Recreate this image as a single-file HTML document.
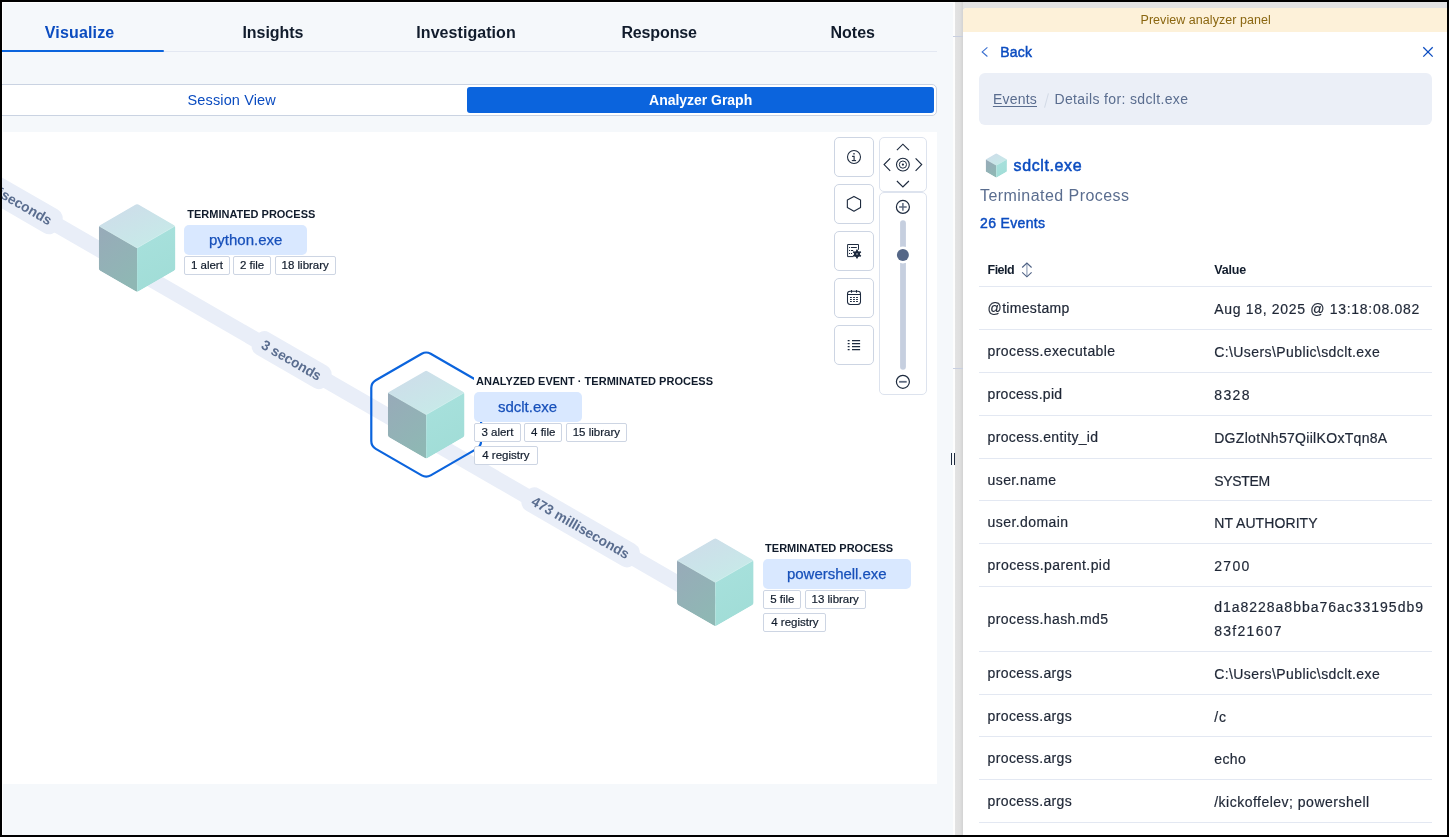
<!DOCTYPE html><html><head><meta charset="utf-8"><style>
*{box-sizing:border-box}
html,body{margin:0;padding:0;width:1449px;height:837px;overflow:hidden;background:#000;font-family:"Liberation Sans", sans-serif}
#frame{position:absolute;left:2px;top:2px;width:1445px;height:833px;background:#fff;overflow:hidden}
#in{position:absolute;left:-2px;top:-2px;width:1449px;height:837px;will-change:transform}
.t{position:absolute;white-space:pre;line-height:1;font-family:"Liberation Sans", sans-serif}
.pill{position:absolute;height:29.7px;background:#d9e8ff;border-radius:5px}
.bdg{position:absolute;height:19px;border:1px solid #cdd5e3;border-radius:2px;background:#fff;font-size:11.5px;color:#111c2c;-webkit-text-stroke:0.2px #111c2c;line-height:17px;text-align:center;white-space:pre}
.cbtn{position:absolute;left:834px;width:40px;height:40px;border:1px solid #cdd5e3;border-radius:5px;background:#fff}
.cbtn svg,.navbox svg{position:absolute;left:-1px;top:-1px}
.navbox{position:absolute;border:1px solid #dde3ee;border-radius:5px;background:#fff}
</style></head><body><div id="frame"><div id="in">
<div style="position:absolute;left:3px;top:3px;width:950px;height:834px;background:#f5f8fb"></div>
<div style="position:absolute;left:2px;top:51px;width:935px;height:1px;background:#e3e8f2"></div>
<div style="position:absolute;left:2px;top:50px;width:162px;height:2px;background:#0b64dd;border-radius:0 1px 1px 0"></div>
<div style="position:absolute;left:-10px;top:84px;width:946.5px;height:32px;background:#fff;border:1px solid #cad3e2;border-radius:5px"></div>
<div style="position:absolute;left:467px;top:87px;width:467px;height:26px;background:#0b64dd;border-radius:3px"></div>
<div style="position:absolute;left:2px;top:132px;width:935px;height:652px;background:#fff"></div>
<svg width="935" height="652" viewBox="2 132 935 652" style="position:absolute;left:2px;top:132px"><defs><linearGradient id="gt" x1="0" y1="0" x2="0.8" y2="1"><stop offset="0" stop-color="#cfdbea"/><stop offset="1" stop-color="#c6ebe8"/></linearGradient><linearGradient id="gl" x1="0" y1="0" x2="0.5" y2="1"><stop offset="0" stop-color="#98aab9"/><stop offset="1" stop-color="#8fb7b4"/></linearGradient><linearGradient id="gr" x1="0" y1="0" x2="0.3" y2="1"><stop offset="0" stop-color="#a8e1dd"/><stop offset="1" stop-color="#a1ddd7"/></linearGradient></defs><line x1="-60" y1="157.45" x2="715" y2="604.94" stroke="#e9eef8" stroke-width="15.5"/><g transform="translate(3.1,193.6) rotate(30)"><rect x="-65.25" y="-13.5" width="130.5" height="27" rx="10" fill="#e9eef8"/><text x="0" y="5.04" text-anchor="middle" font-family="Liberation Sans" font-weight="700" font-size="14" fill="#5a6d8f" textLength="110.5" lengthAdjust="spacingAndGlyphs">473 milliseconds</text></g><g transform="translate(291.6,360.1) rotate(30)"><rect x="-43.25" y="-12.75" width="86.5" height="25.5" rx="10" fill="#e9eef8"/><text x="0" y="5.04" text-anchor="middle" font-family="Liberation Sans" font-weight="700" font-size="14" fill="#5a6d8f" textLength="66.5" lengthAdjust="spacingAndGlyphs">3 seconds</text></g><g transform="translate(580.6,527.4) rotate(30)"><rect x="-65.25" y="-12.75" width="130.5" height="25.5" rx="10" fill="#e9eef8"/><text x="0" y="5.04" text-anchor="middle" font-family="Liberation Sans" font-weight="700" font-size="14" fill="#5a6d8f" textLength="110.5" lengthAdjust="spacingAndGlyphs">473 milliseconds</text></g><path d="M421.70,353.80 Q426.20,351.20 430.70,353.80 L476.61,380.30 Q481.11,382.90 481.11,388.09 L481.11,441.11 Q481.11,446.30 476.61,448.90 L430.70,475.40 Q426.20,478.00 421.70,475.40 L375.79,448.90 Q371.29,446.30 371.29,441.11 L371.29,388.09 Q371.29,382.90 375.79,380.30 Z" fill="none" stroke="#0b64dd" stroke-width="2.2"/><clipPath id="cc1"><path d="M135.50,204.62 Q137.10,203.70 138.70,204.62 L173.78,224.88 Q175.38,225.80 175.38,227.65 L175.38,268.15 Q175.38,270.00 173.78,270.92 L138.70,291.18 Q137.10,292.10 135.50,291.18 L100.42,270.92 Q98.82,270.00 98.82,268.15 L98.82,227.65 Q98.82,225.80 100.42,224.88 Z"/></clipPath><g clip-path="url(#cc1)"><polygon points="137.10,203.70 175.40,225.80 137.10,247.90 98.80,225.80" fill="url(#gt)" stroke="url(#gt)" stroke-width="0.3"/><polygon points="98.80,225.80 137.10,247.90 137.10,292.10 98.80,270.00" fill="url(#gl)"/><polygon points="137.10,247.90 175.40,225.80 175.40,270.00 137.10,292.10" fill="url(#gr)"/><polyline points="98.80,225.80 137.10,247.90 175.40,225.80" fill="none" stroke="#d2eeee" stroke-width="0.9" stroke-opacity="0.8"/></g><clipPath id="cc2"><path d="M424.60,371.32 Q426.20,370.40 427.80,371.32 L462.88,391.58 Q464.48,392.50 464.48,394.35 L464.48,434.85 Q464.48,436.70 462.88,437.62 L427.80,457.88 Q426.20,458.80 424.60,457.88 L389.52,437.62 Q387.92,436.70 387.92,434.85 L387.92,394.35 Q387.92,392.50 389.52,391.58 Z"/></clipPath><g clip-path="url(#cc2)"><polygon points="426.20,370.40 464.50,392.50 426.20,414.60 387.90,392.50" fill="url(#gt)" stroke="url(#gt)" stroke-width="0.3"/><polygon points="387.90,392.50 426.20,414.60 426.20,458.80 387.90,436.70" fill="url(#gl)"/><polygon points="426.20,414.60 464.50,392.50 464.50,436.70 426.20,458.80" fill="url(#gr)"/><polyline points="387.90,392.50 426.20,414.60 464.50,392.50" fill="none" stroke="#d2eeee" stroke-width="0.9" stroke-opacity="0.8"/></g><clipPath id="cc3"><path d="M713.70,539.02 Q715.30,538.10 716.90,539.02 L751.98,559.28 Q753.58,560.20 753.58,562.05 L753.58,602.55 Q753.58,604.40 751.98,605.32 L716.90,625.58 Q715.30,626.50 713.70,625.58 L678.62,605.32 Q677.02,604.40 677.02,602.55 L677.02,562.05 Q677.02,560.20 678.62,559.28 Z"/></clipPath><g clip-path="url(#cc3)"><polygon points="715.30,538.10 753.60,560.20 715.30,582.30 677.00,560.20" fill="url(#gt)" stroke="url(#gt)" stroke-width="0.3"/><polygon points="677.00,560.20 715.30,582.30 715.30,626.50 677.00,604.40" fill="url(#gl)"/><polygon points="715.30,582.30 753.60,560.20 753.60,604.40 715.30,626.50" fill="url(#gr)"/><polyline points="677.00,560.20 715.30,582.30 753.60,560.20" fill="none" stroke="#d2eeee" stroke-width="0.9" stroke-opacity="0.8"/></g></svg>
<div class="pill" style="left:184.2px;top:225px;width:122.8px"></div><div class="bdg" style="left:184.2px;top:256.0px;width:45.4px">1 alert</div><div class="bdg" style="left:232.8px;top:256.0px;width:38.5px">2 file</div><div class="bdg" style="left:274.5px;top:256.0px;width:61.4px">18 library</div><div style="position:absolute;left:474px;top:374px;width:240px;height:18px;background:#fff"></div><div class="pill" style="left:474px;top:392px;width:107.9px"></div><div class="bdg" style="left:474.0px;top:423.0px;width:46.8px">3 alert</div><div class="bdg" style="left:524.0px;top:423.0px;width:38.4px">4 file</div><div class="bdg" style="left:565.6px;top:423.0px;width:61.5px">15 library</div><div class="bdg" style="left:474.0px;top:446.0px;width:63.8px">4 registry</div><div class="pill" style="left:763.3px;top:559px;width:147.5px"></div><div class="bdg" style="left:763.3px;top:590.3px;width:38.1px">5 file</div><div class="bdg" style="left:804.6px;top:590.3px;width:61.2px">13 library</div><div class="bdg" style="left:763.3px;top:613.3px;width:63.2px">4 registry</div>
<div class="cbtn" style="top:137px"><svg width="40" height="40" viewBox="0 0 40 40"><circle cx="20" cy="20" r="6.5" fill="none" stroke="#1d2a3e" stroke-width="1.05"/><rect x="19.3" y="16.1" width="1.4" height="1.4" fill="#1d2a3e"/><path d="M18.1 19.4H20.1V23.4" fill="none" stroke="#1d2a3e" stroke-width="1.1"/><path d="M17.8 23.6H22.1" stroke="#1d2a3e" stroke-width="1.1"/></svg></div><div class="cbtn" style="top:184px"><svg width="40" height="40" viewBox="0 0 40 40"><polygon points="19.95,12.4 26.55,16.1 26.55,23.5 19.95,27.2 13.35,23.5 13.35,16.1" fill="none" stroke="#1d2a3e" stroke-width="1.1" stroke-linejoin="round"/></svg></div><div class="cbtn" style="top:231px"><svg width="40" height="40" viewBox="0 0 40 40"><path d="M24.5 19.2V13.5H13.6V25.6H19.6" fill="none" stroke="#1d2a3e" stroke-width="1"/><path d="M15 16.5h1.1M15 19.5h1.1M15 22.5h1.1M17 16.5h5.8M17 19.5h2.2M17 22.5h1.1" stroke="#1d2a3e" stroke-width="1.1"/><circle cx="23" cy="23" r="4.5" fill="#fff"/><circle cx="23" cy="23" r="3.1" fill="#1d2a3e"/><rect x="22.1" y="18.6" width="1.8" height="8.8" fill="#1d2a3e" transform="rotate(0 23 23)"/><rect x="22.1" y="18.6" width="1.8" height="8.8" fill="#1d2a3e" transform="rotate(60 23 23)"/><rect x="22.1" y="18.6" width="1.8" height="8.8" fill="#1d2a3e" transform="rotate(120 23 23)"/><rect x="22.4" y="22.4" width="1.2" height="1.2" fill="#fff"/></svg></div><div class="cbtn" style="top:278px"><svg width="40" height="40" viewBox="0 0 40 40"><rect x="13.5" y="13.3" width="13" height="13.1" rx="2.6" fill="none" stroke="#1d2a3e" stroke-width="1.05"/><path d="M17.5 11.9v2.9M22.5 11.9v2.9M13.6 16.5h12.8" stroke="#1d2a3e" stroke-width="1.05"/><path d="M16 19.5h1.8M19.1 19.5h1.8M22.1 19.5h1.8M16 21.5h1.8M19.1 21.5h1.8M22.1 21.5h1.8M16 23.5h1.8M19.1 23.5h1.8M22.1 23.5h1.8" stroke="#1d2a3e" stroke-width="1.05"/></svg></div><div class="cbtn" style="top:325px"><svg width="40" height="40" viewBox="0 0 40 40"><path d="M13.7 15.6h1.9M13.7 18.6h1.9M13.7 21.6h1.9M13.7 24.6h1.9M18.0 15.6h8.1M18.0 18.6h8.1M18.0 21.6h8.1M18.0 24.6h8.1" stroke="#1d2a3e" stroke-width="1.1"/></svg></div>
<div class="navbox" style="left:879px;top:137px;width:48px;height:55px"><svg width="48" height="55" viewBox="0 0 48 55">
<path d="M17.90 13.20L23.90 7.20L29.90 13.20" fill="none" stroke="#1d2a3e" stroke-width="1.15"/>
<path d="M17.90 44.00L23.90 50.00L29.90 44.00" fill="none" stroke="#1d2a3e" stroke-width="1.15"/>
<path d="M11.20 21.40L5.10 27.60L11.20 33.80" fill="none" stroke="#1d2a3e" stroke-width="1.15"/>
<path d="M36.60 21.40L42.70 27.60L36.60 33.80" fill="none" stroke="#1d2a3e" stroke-width="1.15"/>
<circle cx="23.899999999999977" cy="27.599999999999994" r="6.4" fill="none" stroke="#1d2a3e" stroke-width="1.1"/>
<circle cx="23.899999999999977" cy="27.599999999999994" r="3.6" fill="none" stroke="#1d2a3e" stroke-width="1.0"/>
<circle cx="23.899999999999977" cy="27.599999999999994" r="1.1" fill="#1d2a3e"/>
</svg></div>
<div class="navbox" style="left:879px;top:192px;width:48px;height:203px"><svg width="48" height="203" viewBox="0 0 48 203">
<circle cx="23.899999999999977" cy="14.900000000000006" r="6.5" fill="none" stroke="#1d2a3e" stroke-width="1.2"/>
<path d="M23.899999999999977 11.099999999999994v7.6M20.100000000000023 14.900000000000006h7.6" stroke="#5f6b80" stroke-width="1.5"/>
<rect x="21.100000000000023" y="28.19999999999999" width="5.8" height="149.5" rx="2.9" fill="#c6cfdf"/>
<circle cx="23.899999999999977" cy="62.900000000000006" r="8.5" fill="#fff"/>
<circle cx="23.899999999999977" cy="62.900000000000006" r="6" fill="#556787"/>
<circle cx="23.899999999999977" cy="189.8" r="6.5" fill="none" stroke="#1d2a3e" stroke-width="1.2"/>
<path d="M20.100000000000023 189.8h7.6" stroke="#5f6b80" stroke-width="1.8"/>
</svg></div>
<div style="position:absolute;left:953px;top:0;width:2px;height:837px;background:#fdfdfd"></div>
<div style="position:absolute;left:955px;top:2px;width:492px;height:835px;background:#e3e3e3"></div><div style="position:absolute;left:955px;top:2px;width:8px;height:835px;background:linear-gradient(90deg,#e3e3e3 0,#dfdfdf 5px,#d3d3d3 8px)"></div>
<div style="position:absolute;left:953px;top:36px;width:10px;height:1px;background:#c8cfe0"></div>
<div style="position:absolute;left:953px;top:368px;width:10px;height:1px;background:#c8cfe0"></div>
<div style="position:absolute;left:950.6px;top:453px;width:1.1px;height:12px;background:#1d2a3e"></div>
<div style="position:absolute;left:954.4px;top:453px;width:1.1px;height:12px;background:#1d2a3e"></div>
<div style="position:absolute;left:963px;top:8px;width:486px;height:829px;background:#fff;border-top-left-radius:4px;overflow:hidden">
  <div style="position:absolute;left:0;top:0;width:486px;height:23.8px;background:#fdf1d9"></div>
</div>
<svg style="position:absolute;left:975px;top:40px" width="20" height="24" viewBox="975 40 20 24"><path d="M987.4 47.3l-5.2 4.6 5.2 4.6" fill="none" stroke="#3a6fd0" stroke-width="1.1"/></svg>
<svg style="position:absolute;left:1418px;top:42px" width="20" height="20" viewBox="1418 42 20 20"><path d="M1423.3 47.3l9.4 9.3M1432.7 47.3l-9.4 9.3" fill="none" stroke="#0b4cc0" stroke-width="1.3"/></svg>
<div style="position:absolute;left:978.9px;top:73.4px;width:452.8px;height:51.3px;background:#ebeff7;border-radius:6px"></div>
<div style="position:absolute;left:1046px;top:93px;width:1px;height:15px;background:#d3dae6;transform:rotate(15deg)"></div>
<svg style="position:absolute;left:980px;top:150px" width="34" height="32" viewBox="980 150 34 32"><defs><linearGradient id="sgt" x1="0" y1="0" x2="0.8" y2="1"><stop offset="0" stop-color="#cfdbea"/><stop offset="1" stop-color="#c6ebe8"/></linearGradient><linearGradient id="sgl" x1="0" y1="0" x2="0.5" y2="1"><stop offset="0" stop-color="#98aab9"/><stop offset="1" stop-color="#8fb7b4"/></linearGradient><linearGradient id="sgr" x1="0" y1="0" x2="0.3" y2="1"><stop offset="0" stop-color="#a8e1dd"/><stop offset="1" stop-color="#a1ddd7"/></linearGradient></defs><clipPath id="ccs4"><path d="M995.86,153.51 Q996.30,153.26 996.74,153.51 L1006.46,159.12 Q1006.90,159.38 1006.90,159.89 L1006.90,171.11 Q1006.90,171.62 1006.46,171.88 L996.74,177.49 Q996.30,177.74 995.86,177.49 L986.14,171.88 Q985.70,171.62 985.70,171.11 L985.70,159.89 Q985.70,159.38 986.14,159.12 Z"/></clipPath><g clip-path="url(#ccs4)"><polygon points="996.30,153.26 1006.91,159.38 996.30,165.50 985.69,159.38" fill="url(#sgt)" stroke="url(#sgt)" stroke-width="0.3"/><polygon points="985.69,159.38 996.30,165.50 996.30,177.74 985.69,171.62" fill="url(#sgl)"/><polygon points="996.30,165.50 1006.91,159.38 1006.91,171.62 996.30,177.74" fill="url(#sgr)"/><polyline points="985.69,159.38 996.30,165.50 1006.91,159.38" fill="none" stroke="#d2eeee" stroke-width="0" stroke-opacity="0.8"/></g></svg>
<svg style="position:absolute;left:1018px;top:259px" width="18" height="22" viewBox="1018 259 18 22"><path d="M1026.9 263.4v13" stroke="#a3afc3" stroke-width="1.4"/><path d="M1022.2 267.5L1026.9 263.0L1031.6 267.5M1022.2 272.4L1026.9 276.8L1031.6 272.4" stroke="#4f6285" stroke-width="1.15" fill="none"/></svg>
<div style="position:absolute;left:979px;top:286px;width:453px;height:1px;background:#e3e8f2"></div><div style="position:absolute;left:979px;top:329px;width:453px;height:1px;background:#e3e8f2"></div><div style="position:absolute;left:979px;top:372px;width:453px;height:1px;background:#e3e8f2"></div><div style="position:absolute;left:979px;top:415px;width:453px;height:1px;background:#e3e8f2"></div><div style="position:absolute;left:979px;top:458px;width:453px;height:1px;background:#e3e8f2"></div><div style="position:absolute;left:979px;top:500px;width:453px;height:1px;background:#e3e8f2"></div><div style="position:absolute;left:979px;top:543px;width:453px;height:1px;background:#e3e8f2"></div><div style="position:absolute;left:979px;top:586px;width:453px;height:1px;background:#e3e8f2"></div><div style="position:absolute;left:979px;top:651px;width:453px;height:1px;background:#e3e8f2"></div><div style="position:absolute;left:979px;top:694px;width:453px;height:1px;background:#e3e8f2"></div><div style="position:absolute;left:979px;top:736px;width:453px;height:1px;background:#e3e8f2"></div><div style="position:absolute;left:979px;top:779px;width:453px;height:1px;background:#e3e8f2"></div><div style="position:absolute;left:979px;top:822px;width:453px;height:1px;background:#e3e8f2"></div>
<div class="t" style="left:44.80px;top:25.00px;font-size:16px;font-weight:700;color:#0b4cc0;letter-spacing:0.152px;">Visualize</div><div class="t" style="left:242.40px;top:25.00px;font-size:16px;font-weight:700;color:#111c2c;letter-spacing:-0.035px;">Insights</div><div class="t" style="left:416.30px;top:25.00px;font-size:16px;font-weight:700;color:#111c2c;letter-spacing:0.059px;">Investigation</div><div class="t" style="left:621.40px;top:25.00px;font-size:16px;font-weight:700;color:#111c2c;letter-spacing:-0.124px;">Response</div><div class="t" style="left:830.50px;top:25.00px;font-size:16px;font-weight:700;color:#111c2c;letter-spacing:0.012px;">Notes</div><div class="t" style="left:187.50px;top:93.00px;font-size:14.5px;font-weight:400;color:#0b4cc0;letter-spacing:0.138px;">Session View</div><div class="t" style="left:649.10px;top:93.00px;font-size:14px;font-weight:700;color:#ffffff;letter-spacing:-0.030px;">Analyzer Graph</div><div class="t" style="left:187.30px;top:209.00px;font-size:11px;font-weight:700;color:#111c2c;letter-spacing:-0.008px;">TERMINATED PROCESS</div><div class="t" style="left:209.00px;top:232.00px;font-size:15px;font-weight:400;color:#1750ba;letter-spacing:0.001px;-webkit-text-stroke:0.25px #1750ba;">python.exe</div><div class="t" style="left:476.00px;top:376.00px;font-size:11px;font-weight:700;color:#111c2c;letter-spacing:0.014px;">ANALYZED EVENT · TERMINATED PROCESS</div><div class="t" style="left:497.90px;top:399.00px;font-size:15px;font-weight:400;color:#1750ba;letter-spacing:0.012px;-webkit-text-stroke:0.25px #1750ba;">sdclt.exe</div><div class="t" style="left:765.10px;top:543.00px;font-size:11px;font-weight:700;color:#111c2c;letter-spacing:-0.008px;">TERMINATED PROCESS</div><div class="t" style="left:787.00px;top:566.00px;font-size:15px;font-weight:400;color:#1750ba;letter-spacing:-0.036px;-webkit-text-stroke:0.25px #1750ba;">powershell.exe</div><div class="t" style="left:1140.50px;top:14.00px;font-size:12.5px;font-weight:400;color:#8a6610;letter-spacing:0.050px;">Preview analyzer panel</div><div class="t" style="left:1000.30px;top:45.00px;font-size:14px;font-weight:400;color:#0b4cc0;letter-spacing:0.225px;-webkit-text-stroke:0.45px #0b4cc0;">Back</div><div class="t" style="left:992.90px;top:92.00px;font-size:14px;font-weight:400;color:#5a6d8f;letter-spacing:0.217px;text-decoration:underline;text-underline-offset:2px;">Events</div><div class="t" style="left:1054.50px;top:92.00px;font-size:14px;font-weight:400;color:#5a6d8f;letter-spacing:0.354px;">Details for: sdclt.exe</div><div class="t" style="left:1013.60px;top:158.00px;font-size:16px;font-weight:400;color:#0b4cc0;letter-spacing:0.607px;-webkit-text-stroke:0.5px #0b4cc0;">sdclt.exe</div><div class="t" style="left:980.00px;top:188.00px;font-size:16px;font-weight:400;color:#5a6d8f;letter-spacing:0.448px;">Terminated Process</div><div class="t" style="left:980.00px;top:216.00px;font-size:14px;font-weight:400;color:#0b4cc0;letter-spacing:0.342px;-webkit-text-stroke:0.45px #0b4cc0;">26 Events</div><div class="t" style="left:987.60px;top:264.00px;font-size:12.5px;font-weight:700;color:#111c2c;letter-spacing:-0.543px;">Field</div><div class="t" style="left:1214.20px;top:264.00px;font-size:12.5px;font-weight:700;color:#111c2c;letter-spacing:-0.168px;">Value</div><div class="t" style="left:987.60px;top:301.00px;font-size:14px;font-weight:400;color:#1f2736;letter-spacing:0.323px;-webkit-text-stroke:0.2px #1f2736;">@timestamp</div><div class="t" style="left:1214.20px;top:302.00px;font-size:14px;font-weight:400;color:#1f2736;letter-spacing:0.691px;-webkit-text-stroke:0.2px #1f2736;">Aug 18, 2025 @ 13:18:08.082</div><div class="t" style="left:987.60px;top:344.00px;font-size:14px;font-weight:400;color:#1f2736;letter-spacing:0.403px;-webkit-text-stroke:0.2px #1f2736;">process.executable</div><div class="t" style="left:1214.20px;top:345.00px;font-size:14px;font-weight:400;color:#1f2736;letter-spacing:0.412px;-webkit-text-stroke:0.2px #1f2736;">C:\Users\Public\sdclt.exe</div><div class="t" style="left:987.60px;top:387.00px;font-size:14px;font-weight:400;color:#1f2736;letter-spacing:0.291px;-webkit-text-stroke:0.2px #1f2736;">process.pid</div><div class="t" style="left:1214.20px;top:388.00px;font-size:14px;font-weight:400;color:#1f2736;letter-spacing:1.415px;-webkit-text-stroke:0.2px #1f2736;">8328</div><div class="t" style="left:987.60px;top:430.00px;font-size:14px;font-weight:400;color:#1f2736;letter-spacing:0.340px;-webkit-text-stroke:0.2px #1f2736;">process.entity_id</div><div class="t" style="left:1214.20px;top:431.00px;font-size:14px;font-weight:400;color:#1f2736;letter-spacing:0.309px;-webkit-text-stroke:0.2px #1f2736;">DGZlotNh57QiilKOxTqn8A</div><div class="t" style="left:987.60px;top:473.00px;font-size:14px;font-weight:400;color:#1f2736;letter-spacing:0.391px;-webkit-text-stroke:0.2px #1f2736;">user.name</div><div class="t" style="left:1214.20px;top:474.00px;font-size:14px;font-weight:400;color:#1f2736;letter-spacing:-0.316px;-webkit-text-stroke:0.2px #1f2736;">SYSTEM</div><div class="t" style="left:987.60px;top:515.00px;font-size:14px;font-weight:400;color:#1f2736;letter-spacing:0.422px;-webkit-text-stroke:0.2px #1f2736;">user.domain</div><div class="t" style="left:1214.20px;top:516.00px;font-size:14px;font-weight:400;color:#1f2736;letter-spacing:0.089px;-webkit-text-stroke:0.2px #1f2736;">NT AUTHORITY</div><div class="t" style="left:987.60px;top:558.00px;font-size:14px;font-weight:400;color:#1f2736;letter-spacing:0.436px;-webkit-text-stroke:0.2px #1f2736;">process.parent.pid</div><div class="t" style="left:1214.20px;top:559.00px;font-size:14px;font-weight:400;color:#1f2736;letter-spacing:1.315px;-webkit-text-stroke:0.2px #1f2736;">2700</div><div class="t" style="left:987.60px;top:612.00px;font-size:14px;font-weight:400;color:#1f2736;letter-spacing:0.406px;-webkit-text-stroke:0.2px #1f2736;">process.hash.md5</div><div class="t" style="left:1214.20px;top:600.00px;font-size:14px;font-weight:400;color:#1f2736;letter-spacing:0.987px;-webkit-text-stroke:0.2px #1f2736;">d1a8228a8bba76ac33195db9</div><div class="t" style="left:1214.20px;top:624.00px;font-size:14px;font-weight:400;color:#1f2736;letter-spacing:1.285px;-webkit-text-stroke:0.2px #1f2736;">83f21607</div><div class="t" style="left:987.60px;top:666.00px;font-size:14px;font-weight:400;color:#1f2736;letter-spacing:0.359px;-webkit-text-stroke:0.2px #1f2736;">process.args</div><div class="t" style="left:1214.20px;top:667.00px;font-size:14px;font-weight:400;color:#1f2736;letter-spacing:0.412px;-webkit-text-stroke:0.2px #1f2736;">C:\Users\Public\sdclt.exe</div><div class="t" style="left:987.60px;top:709.00px;font-size:14px;font-weight:400;color:#1f2736;letter-spacing:0.359px;-webkit-text-stroke:0.2px #1f2736;">process.args</div><div class="t" style="left:1214.20px;top:710.00px;font-size:14px;font-weight:400;color:#1f2736;letter-spacing:1.009px;-webkit-text-stroke:0.2px #1f2736;">/c</div><div class="t" style="left:987.60px;top:751.00px;font-size:14px;font-weight:400;color:#1f2736;letter-spacing:0.359px;-webkit-text-stroke:0.2px #1f2736;">process.args</div><div class="t" style="left:1214.20px;top:752.00px;font-size:14px;font-weight:400;color:#1f2736;letter-spacing:0.447px;-webkit-text-stroke:0.2px #1f2736;">echo</div><div class="t" style="left:987.60px;top:794.00px;font-size:14px;font-weight:400;color:#1f2736;letter-spacing:0.359px;-webkit-text-stroke:0.2px #1f2736;">process.args</div><div class="t" style="left:1214.20px;top:795.00px;font-size:14px;font-weight:400;color:#1f2736;letter-spacing:0.491px;-webkit-text-stroke:0.2px #1f2736;">/kickoffelev; powershell</div>
</div></div></body></html>
